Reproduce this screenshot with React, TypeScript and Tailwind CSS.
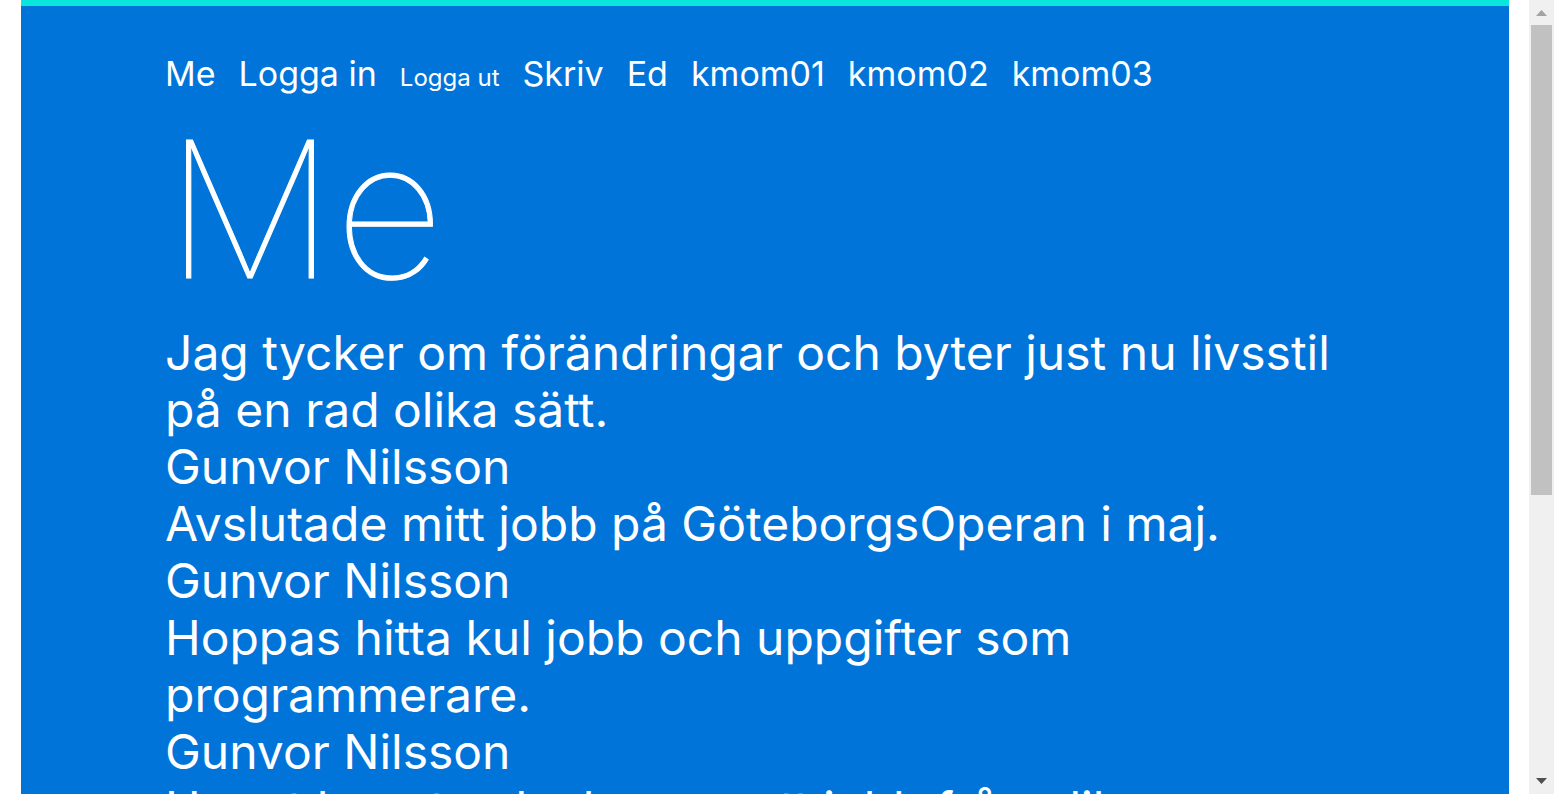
export default function App() {
  const links = ["Me", "Logga in", "Logga ut", "Skriv", "Ed", "kmom01", "kmom02", "kmom03"];
  const posts = [
    "Jag tycker om förändringar och byter just nu livsstil på en rad olika sätt.",
    "Avslutade mitt jobb på GöteborgsOperan i maj.",
    "Hoppas hitta kul jobb och uppgifter som programmerare.",
    "Har ut lagret och skapare ett jobb från olika arbetsgivare.",
  ];
  return (
    <div className="flex h-screen overflow-hidden bg-white font-['Inter',sans-serif] text-white">
      <main className="ml-[21px] mr-5 flex-1 overflow-hidden border-t-6 border-[#0be6dc] bg-[#0074d9] px-36 pt-[46px]">
        <nav className="flex items-baseline gap-[23px] text-[34px] leading-[44px] whitespace-nowrap">
          {links.map((l) =>
            l === "Logga ut" ? (
              <button key={l} type="button" className="text-2xl">{l}</button>
            ) : (
              <a key={l} href={"#" + l}>{l}</a>
            )
          )}
        </nav>
        <h1 className="mt-[13px] text-[190px] leading-[200px] font-thin [-webkit-text-stroke:1px_white]">Me</h1>
        <div className="mt-[15px] text-[48px] leading-[57px] [font-feature-settings:'calt'_0]">
          {posts.map((p) => (
            <article key={p}>
              <p>{p}</p>
              <p>Gunvor Nilsson</p>
            </article>
          ))}
        </div>
      </main>
      <div aria-hidden="true" className="flex w-[25px] flex-col items-center bg-[#f0f0f0]">
        <div className="flex h-[25px] shrink-0 items-center">
          <svg width="11" height="6" viewBox="0 0 11 6" className="fill-[#a3a3a3]"><path d="M5.5 0 11 6H0z" /></svg>
        </div>
        <div className="h-[470px] w-[21px] bg-[#c1c1c1]" />
        <div className="mt-auto flex h-[26px] items-center">
          <svg width="11" height="6" viewBox="0 0 11 6" className="fill-[#505050]"><path d="M0 0H11L5.5 6z" /></svg>
        </div>
      </div>
    </div>
  );
}
